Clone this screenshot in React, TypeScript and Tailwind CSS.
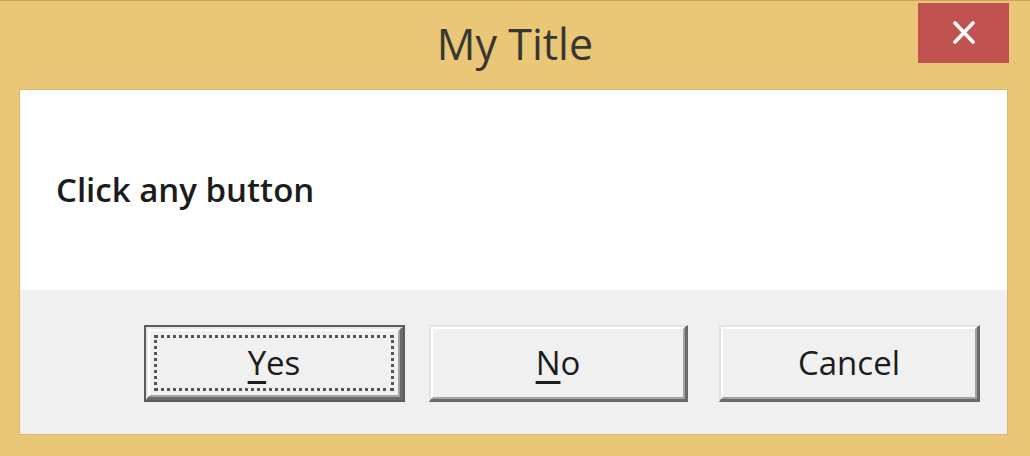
export default function App() {
  const face = "font-['Open_Sans','Liberation_Sans',sans-serif]";
  return (
    <div className={`relative flex h-[456px] w-[1030px] flex-col border-t border-[#c9a85c] bg-[#EAC677] ${face}`}>
      {/* title bar */}
      <div className="flex h-[89px] items-center justify-center pb-[2px] text-[43px] text-[#383732]">My Title</div>
      <div className="absolute right-[21px] top-[2px] flex h-[60px] w-[91px] items-center justify-center bg-[#C0524F]">
        <svg width="26" height="24" viewBox="0 0 26 24">
          <path d="M4 2 L22 21 M22 2 L4 21" stroke="#ffffff" strokeWidth="3.6" strokeLinecap="round" />
        </svg>
      </div>

      {/* client area */}
      <div className="mb-[22px] ml-[20px] mr-[23px] flex flex-1 flex-col shadow-[0_0_0_1px_#d9b86c]">
        <div className="flex h-[200px] items-center bg-white pl-[36px] text-[33px] font-semibold text-[#1c1c1c]">
          Click any button
        </div>
        <div className="flex flex-1 items-start justify-end bg-[#F0F0F0] pr-[27px] pt-[35px]">
          {/* default button */}
          <div className="h-[77px] w-[261px] border-[2px] border-[#5c5c5c]">
            <div className="h-full border-b-[3px] border-l-[2px] border-r-[3px] border-t-[2px] border-b-[#6a6a6a] border-l-[#e6e6e6] border-r-[#6a6a6a] border-t-[#e6e6e6]">
              <div className="h-full border-b-[2px] border-l-[2px] border-r-[2px] border-t-[2px] border-b-[#a3a3a3] border-l-white border-r-[#a3a3a3] border-t-white bg-[#F0F0F0] p-[4px]">
                <div className="flex h-full items-center justify-center border-[3px] border-dotted border-[#555] text-[33px] text-[#1c1c1c]">
                  <span>
                    <span className="underline decoration-[3px] underline-offset-[6px]">Y</span>es
                  </span>
                </div>
              </div>
            </div>
          </div>

          <div className="ml-[24px] h-[77px] w-[259px] border-b-[3px] border-l-[2px] border-r-[3px] border-t-[2px] border-b-[#6a6a6a] border-l-[#e3e3e3] border-r-[#6a6a6a] border-t-[#e3e3e3]">
            <div className="flex h-full items-center justify-center border-b-[2px] border-l-[2px] border-r-[2px] border-t-[2px] border-b-[#a3a3a3] border-l-white border-r-[#a3a3a3] border-t-white text-[33px] text-[#1c1c1c]">
              <span>
                <span className="underline decoration-[3px] underline-offset-[6px]">N</span>o
              </span>
            </div>
          </div>

          <div className="ml-[31px] h-[77px] w-[261px] border-b-[3px] border-l-[2px] border-r-[3px] border-t-[2px] border-b-[#6a6a6a] border-l-[#e3e3e3] border-r-[#6a6a6a] border-t-[#e3e3e3]">
            <div className="flex h-full items-center justify-center border-b-[2px] border-l-[2px] border-r-[2px] border-t-[2px] border-b-[#a3a3a3] border-l-white border-r-[#a3a3a3] border-t-white text-[33px] text-[#1c1c1c]">
              Cancel
            </div>
          </div>
        </div>
      </div>
    </div>
  );
}
